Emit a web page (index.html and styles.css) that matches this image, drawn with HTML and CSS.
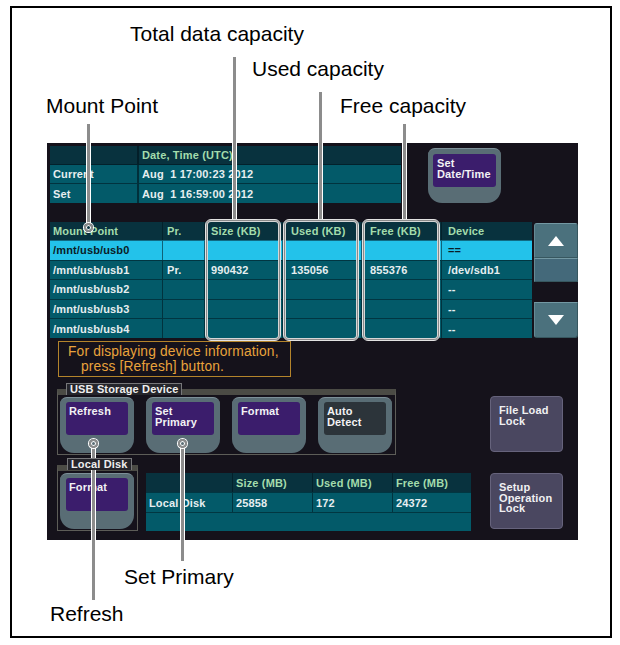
FILE: index.html
```html
<!DOCTYPE html>
<html>
<head>
<meta charset="utf-8">
<link rel="stylesheet" href="styles.css">
</head>
<body>
<div class="page">
  <div class="frame">
    <div class="screen">
      <div class="top-row">
        <div class="dt">
          <div class="cell hd c1"></div>
          <div class="cell hd">Date, Time (UTC)</div>
          <div class="cell tl c1">Current</div>
          <div class="cell tl">Aug  1 17:00:23 2012</div>
          <div class="cell tl c1 last">Set</div>
          <div class="cell tl last">Aug  1 16:59:00 2012</div>
        </div>
        <div class="hbtn set-dt"><div class="hin">Set<br>Date/Time</div></div>
      </div>

      <div class="main-row">
        <div class="mt">
          <div class="cell hd p3">Mount Point</div>
          <div class="cell hd p4">Pr.</div>
          <div class="cell hd p6">Size (KB)</div>
          <div class="cell hd p8">Used (KB)</div>
          <div class="cell hd p8">Free (KB)</div>
          <div class="cell hd p6 lastc">Device</div>

          <div class="cell sel p3">/mnt/usb/usb0</div>
          <div class="cell sel p4"></div>
          <div class="cell sel p6"></div>
          <div class="cell sel p8"></div>
          <div class="cell sel p8"></div>
          <div class="cell sel p6 lastc">==</div>

          <div class="cell tl rw p3">/mnt/usb/usb1</div>
          <div class="cell tl rw p4">Pr.</div>
          <div class="cell tl rw p6">990432</div>
          <div class="cell tl rw p8">135056</div>
          <div class="cell tl rw p8">855376</div>
          <div class="cell tl rw p6 lastc">/dev/sdb1</div>

          <div class="cell tl rw p3">/mnt/usb/usb2</div>
          <div class="cell tl rw p4"></div>
          <div class="cell tl rw p6"></div>
          <div class="cell tl rw p8"></div>
          <div class="cell tl rw p8"></div>
          <div class="cell tl rw p6 lastc">--</div>

          <div class="cell tl rw p3">/mnt/usb/usb3</div>
          <div class="cell tl rw p4"></div>
          <div class="cell tl rw p6"></div>
          <div class="cell tl rw p8"></div>
          <div class="cell tl rw p8"></div>
          <div class="cell tl rw p6 lastc">--</div>

          <div class="cell tl rw p3">/mnt/usb/usb4</div>
          <div class="cell tl rw p4"></div>
          <div class="cell tl rw p6"></div>
          <div class="cell tl rw p8"></div>
          <div class="cell tl rw p8"></div>
          <div class="cell tl rw p6 lastc">--</div>

          <div class="ol ol-size"></div>
          <div class="ol ol-used"></div>
          <div class="ol ol-free"></div>
        </div>
        <div class="scroll">
          <div class="sb sb-up"><svg width="16" height="10" viewBox="0 0 16 10"><polygon points="0,10 8,0 16,10" fill="#fff"/></svg></div>
          <div class="sb sb-mid"></div>
          <div class="sb-gap"></div>
          <div class="sb sb-down"><svg width="16" height="10" viewBox="0 0 16 10"><polygon points="0,0 16,0 8,10" fill="#fff"/></svg></div>
        </div>
      </div>

      <div class="info">
        <div>For displaying device information,</div>
        <div class="indent">press [Refresh] button.</div>
      </div>

      <div class="usb-row">
        <div class="group">
          <div class="glabel">USB Storage Device</div>
          <div class="gbox">
            <div class="hbtn"><div class="hin">Refresh</div></div>
            <div class="hbtn"><div class="hin">Set<br>Primary</div></div>
            <div class="hbtn"><div class="hin">Format</div></div>
            <div class="hbtn"><div class="hin gray">Auto<br>Detect</div></div>
          </div>
        </div>
        <div class="lock lock-file">File Load<br>Lock</div>
      </div>

      <div class="local-row">
        <div class="group">
          <div class="glabel local-label">Local Disk</div>
          <div class="gbox local-box">
            <div class="hbtn"><div class="hin">Format</div></div>
          </div>
        </div>
        <div class="ld">
          <div class="cell hd"></div>
          <div class="cell hd p3">Size (MB)</div>
          <div class="cell hd p3">Used (MB)</div>
          <div class="cell hd p3 lastc">Free (MB)</div>
          <div class="cell tl p3">Local Disk</div>
          <div class="cell tl p3">25858</div>
          <div class="cell tl p3">172</div>
          <div class="cell tl p3 lastc">24372</div>
          <div class="cell tl ld-empty"></div>
        </div>
        <div class="lock lock-setup">Setup<br>Operation<br>Lock</div>
      </div>
    </div>
  </div>

  <div class="co-label co-total">Total data capacity</div>
  <div class="co-label co-used">Used capacity</div>
  <div class="co-label co-mount">Mount Point</div>
  <div class="co-label co-free">Free capacity</div>
  <div class="co-label co-setp">Set Primary</div>
  <div class="co-label co-refresh">Refresh</div>

  <div class="co-line l-total"></div>
  <div class="co-line l-used"></div>
  <div class="co-line l-free"></div>
  <div class="co-line l-mount"></div>
  <div class="co-line l-refresh"></div>
  <div class="co-line l-setp"></div>
  <div class="co-dot d-mount"></div>
  <div class="co-dot d-refresh"></div>
  <div class="co-dot d-setp"></div>
</div>
</body>
</html>
```
FILE: styles.css
```css
* { box-sizing: border-box; }
body { margin: 0; background: #fff; font-family: "Liberation Sans", Arial, sans-serif; }
.page { position: relative; width: 620px; height: 645px; overflow: hidden; }

.frame {
  margin: 6px 0 0 10px;
  width: 602px;
  height: 632px;
  border: 2px solid #000;
  padding: 135px 0 0 35px;
}

.screen {
  width: 531px;
  height: 397px;
  background: #15121b;
  padding: 3px 0 0 3px;
  display: flex;
  flex-direction: column;
  font: bold 11px/12px "Liberation Sans", Arial, sans-serif;
  letter-spacing: 0.15px;
  color: #e6eef0;
}

.cell {
  display: flex;
  align-items: center;
  white-space: pre;
  overflow: hidden;
  border-right: 1px solid rgba(0, 20, 28, 0.55);
}
.lastc { border-right: none; }
.hd { background: #08323e; color: #a3dcac; }
.tl { background: #035a69; }
.sel { background: #23c2ea; color: #0a1c26; }
.p3 { padding-left: 3px; }
.p4 { padding-left: 4px; }
.p6 { padding-left: 6px; }
.p8 { padding-left: 8px; }

/* date/time table */
.top-row { display: flex; height: 57px; }
.dt {
  display: grid;
  grid-template-columns: 89px 262px;
  grid-template-rows: 19px 19px 19px;
  width: 351px;
}
.dt .cell { padding-left: 3px; border-bottom: 1px solid rgba(0, 20, 28, 0.55); border-right: none; }
.dt .c1 { border-right: 2px solid rgba(0, 20, 28, 0.6); }
.dt .last { border-bottom: none; }

/* hardware buttons */
.hbtn {
  width: 74px;
  height: 56px;
  flex: none;
  background: #596d75;
  border-top: 1px solid #7d9098;
  border-radius: 7px 7px 14px 14px;
  padding: 4px 6px 0;
}
.hin {
  height: 33px;
  background: #3b1d6c;
  border-radius: 3px;
  padding: 4px 3px 0;
  line-height: 11px;
  color: #f2f2f4;
}
.hin.gray { background: #2c343a; }
.set-dt { width: 73px; height: 55px; margin: 2px 0 0 27px; padding: 5px 5px 0; }
.set-dt .hin { padding-left: 4px; padding-top: 4px; }

/* main table */
.main-row { display: flex; margin-top: 19px; }
.mt {
  position: relative;
  display: grid;
  grid-template-columns: 113px 42px 78px 79px 80px 90px;
  grid-template-rows: 18px repeat(5, 1fr);
  width: 482px;
  height: 116px;
}
.mt .rw, .mt .sel { border-top: 1px solid rgba(0, 20, 28, 0.5); }
.ol {
  position: absolute;
  top: -3px;
  bottom: -3px;
  border: 1px solid #e2e2e2;
  border-radius: 6px;
  box-shadow: inset 0 0 0 1px #8a8a8a, inset 0 0 0 2px #d6d6d6;
}
.ol-size { left: 155px; width: 76px; }
.ol-used { left: 233px; width: 76px; }
.ol-free { left: 312px; width: 78px; }

.scroll {
  margin-left: 2px;
  width: 44px;
  padding-top: 1px;
  display: flex;
  flex-direction: column;
}
.sb {
  background: #4b717d;
  border: 1px solid #37575f;
  border-top-color: #7398a3;
  border-left-color: #658b96;
  display: flex;
  align-items: center;
  justify-content: center;
}
.sb-up { height: 35px; border-radius: 3px 3px 0 0; }
.sb-mid { height: 24px; background: #44697a; }
.sb-gap { height: 20px; }
.sb-down { height: 36px; border-radius: 0 0 3px 3px; }

/* info */
.info {
  margin: 3px 0 0 8px;
  width: 233px;
  height: 36px;
  border: 1px solid #b4842b;
  color: #e9a33c;
  font: 13.8px/15px "Liberation Sans", Arial, sans-serif;
  padding: 2px 0 0 9px;
  white-space: nowrap;
}
.info .indent { padding-left: 13px; }

/* groups */
.usb-row { display: flex; margin-top: 6px; }
.group { display: flex; flex-direction: column; margin-left: 7px; }
.glabel {
  align-self: flex-start;
  position: relative;
  z-index: 1;
  margin-left: 9px;
  height: 12px;
  padding: 0 3px;
  background: #25252b;
  border: 1px solid #77777a;
  border-bottom: none;
  line-height: 11px;
  color: #eeeeee;
}
.gbox {
  margin-top: -6px;
  display: flex;
  gap: 12px;
  border: 1px solid #5d5d58;
  border-top: 6px solid #4b4b45;
  padding: 2px 3px 1px 2px;
}
.lock {
  width: 73px;
  height: 56px;
  background: #4a4760;
  border: 1px solid #66637c;
  border-radius: 4px;
  padding: 8px 0 0 8px;
  line-height: 10.5px;
  color: #f0f0f2;
}
.lock-file { margin: 13px 0 0 94px; }

.local-row { display: flex; margin-top: 3px; }
.local-label { margin-left: 10px; }
.local-box { margin-top: -5px; }
.ld {
  display: grid;
  grid-template-columns: 87px 80px 80px 78px;
  grid-template-rows: 19px 20px 19px;
  width: 325px;
  margin: 15px 0 0 8px;
}
.ld .tl { border-top: 1px solid rgba(0, 20, 28, 0.5); }
.ld-empty { grid-column: 1 / 5; border-right: none; }
.lock-setup { margin: 15px 0 0 19px; }

/* callouts */
.co-label {
  position: absolute;
  font: 21px/21px "Liberation Sans", Arial, sans-serif;
  color: #000;
  white-space: nowrap;
}
.co-total { left: 130px; top: 23px; }
.co-used { left: 252px; top: 58px; }
.co-mount { left: 46px; top: 95px; }
.co-free { left: 340px; top: 95px; }
.co-setp { left: 124px; top: 566px; }
.co-refresh { left: 50px; top: 603px; }

.co-line {
  position: absolute;
  width: 5px;
  background: #8c8c8c;
  border-left: 1px solid #fff;
  border-right: 1px solid #fff;
}
.l-total { left: 232px; top: 57px; height: 162px; }
.l-used { left: 318px; top: 92px; height: 127px; }
.l-free { left: 402px; top: 124px; height: 95px; }
.l-mount { left: 86px; top: 124px; height: 100px; }
.l-refresh { left: 91px; top: 447px; height: 153px; }
.l-setp { left: 180px; top: 447px; height: 114px; }

.co-dot {
  position: absolute;
  width: 9px;
  height: 9px;
  border-radius: 50%;
  border: 2px solid #8c8c8c;
  box-shadow: 0 0 0 1px #fff, inset 0 0 0 1px #fff;
}
.d-mount { left: 84px; top: 223px; }
.d-refresh { left: 89px; top: 439px; }
.d-setp { left: 178px; top: 439px; }
```
